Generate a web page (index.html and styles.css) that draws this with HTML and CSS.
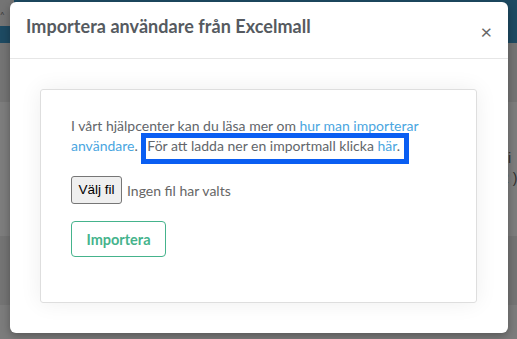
FILE: index.html
```html
<!DOCTYPE html>
<html lang="sv">
<head>
<meta charset="utf-8">
<link rel="stylesheet" href="styles.css">
</head>
<body>
<div class="backdrop">
  <div class="bg-top">
    <div class="bg-top-left"><span class="bg-mark">^</span></div>
    <div class="bg-top-fill"></div>
  </div>
  <div class="bg-nav"></div>
  <div class="bg-section"></div>
  <div class="bg-row">
    <div class="bg-side-text">si<br>2 )</div>
  </div>
  <div class="bg-row2"></div>
  <div class="bg-foot"></div>
</div>

<div class="modal">
  <div class="modal-header">
    <h1 class="modal-title">Importera användare från Excelmall</h1>
    <span class="modal-close">×</span>
  </div>
  <div class="modal-body">
    <div class="card">
      <p class="intro">I vårt hjälpcenter kan du läsa mer om <a class="link">hur man importerar användare</a>. <span class="highlight">För att ladda ner en importmall klicka <a class="link">här</a>.</span></p>
      <div class="file-row">
        <span class="file-btn">Välj fil</span>
        <span class="file-none">Ingen fil har valts</span>
      </div>
      <button class="import-btn">Importera</button>
    </div>
  </div>
</div>
</body>
</html>
```

FILE: styles.css
```css
html, body {
  margin: 0;
  padding: 0;
}
body {
  width: 517px;
  height: 339px;
  overflow: hidden;
  position: relative;
  background: #7b7b7b;
  font-family: "Lato", "Noto Sans", sans-serif;
}
.backdrop {
  display: flex;
  flex-direction: column;
  height: 339px;
}
.bg-top {
  display: flex;
  height: 26px;
}
.bg-top-left {
  width: 14px;
  background: #747474;
  font-size: 8px;
  color: #333;
  padding-top: 10px;
}
.bg-top-fill {
  flex: 1;
  background: #1d4a62;
}
.bg-nav {
  height: 17px;
  background: #1d4a62;
}
.bg-section {
  height: 59px;
  background: #747474;
}
.bg-row {
  height: 134px;
  background: #7d7d7d;
  display: flex;
  justify-content: flex-end;
}
.bg-side-text {
  font-family: "Liberation Sans", Arial, sans-serif;
  font-size: 14px;
  color: #2e2e2e;
  line-height: 20px;
  width: 16px;
  overflow: hidden;
  white-space: nowrap;
  padding-top: 46px;
}
.bg-row2 {
  height: 69px;
  background: #747474;
}
.bg-foot {
  flex: 1;
  background: #7c7c7c;
}

.modal {
  position: absolute;
  left: 10px;
  top: 2px;
  width: 498px;
  height: 331px;
  background: #fff;
  border-radius: 6px;
  box-shadow: 0 3px 9px rgba(0,0,0,0.3);
  display: flex;
  flex-direction: column;
}
.modal-header {
  height: 56px;
  border-bottom: 1px solid #e6e6e6;
  display: flex;
  align-items: center;
  padding: 0 16px;
}
.modal-title {
  flex: 1;
  margin: 0;
  font-size: 18px;
  font-weight: 700;
  color: #555a60;
  margin-top: -8px;
  letter-spacing: 0.05px;
}
.modal-close {
  font-size: 20px;
  color: #666;
  margin-top: 2px;
  line-height: 1;
}
.modal-body {
  padding: 30px 31px 30px 30px;
  flex: 1;
  display: flex;
}
.card {
  flex: 1;
  border: 1px solid #dedede;
  border-radius: 3px;
  box-shadow: 0 0 22px rgba(0,0,0,0.07);
  padding: 26px 30px 30px 30px;
  display: flex;
  flex-direction: column;
  align-items: flex-start;
}
.intro {
  margin: 0;
  font-size: 14px;
  line-height: 20px;
  color: #62666b;
}
.link {
  color: #4aa6df;
  text-decoration: none;
}
.highlight {
  outline: 5px solid #0a5ef2;
  outline-offset: -1px;
  margin-left: 4px;
  padding: 0 5px 6px 2px;
}
.file-row {
  display: flex;
  align-items: center;
  margin-top: 20px;
  font-size: 13px;
  font-family: "Liberation Sans", Arial, sans-serif;
}
.file-btn {
  background: #efefef;
  border: 1px solid #767676;
  border-radius: 3px;
  color: #000;
  padding: 0 6px;
  height: 26px;
  line-height: 26px;
  width: 37px;
  text-align: center;
  font-size: 13.5px;
}
.file-none {
  margin-left: 5px;
  color: #666;
  font-family: "Lato", sans-serif;
  font-size: 14px;
}
.import-btn {
  margin-top: 17px;
  width: 95px;
  height: 36px;
  background: #fff;
  border: 1px solid #45b38c;
  border-radius: 4px;
  color: #45b38c;
  font-family: "Lato", sans-serif;
  font-weight: 700;
  font-size: 14.5px;
  padding: 0;
}
```
